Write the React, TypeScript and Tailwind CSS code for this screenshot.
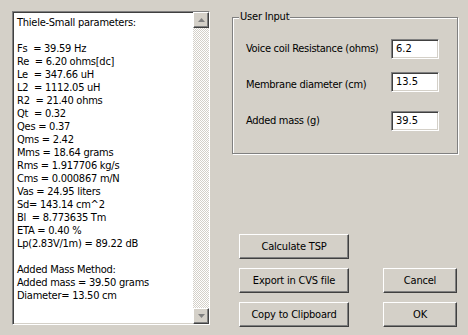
import React from "react";

const results = [
  "Thiele-Small parameters:",
  "",
  "Fs  = 39.59 Hz",
  "Re  = 6.20 ohms[dc]",
  "Le  = 347.66 uH",
  "L2  = 1112.05 uH",
  "R2  = 21.40 ohms",
  "Qt  = 0.32",
  "Qes = 0.37",
  "Qms = 2.42",
  "Mms = 18.64 grams",
  "Rms = 1.917706 kg/s",
  "Cms = 0.000867 m/N",
  "Vas = 24.95 liters",
  "Sd= 143.14 cm^2",
  "Bl  = 8.773635 Tm",
  "ETA = 0.40 %",
  "Lp(2.83V/1m) = 89.22 dB",
  "",
  "Added Mass Method:",
  "Added mass = 39.50 grams",
  "Diameter= 13.50 cm",
];

const raised =
  "border border-t-white border-l-white border-r-[#404040] border-b-[#404040] shadow-[inset_-1px_-1px_0_#808080,inset_1px_1px_0_#d4d0c8] bg-[#d4d0c8]";
const sunken =
  "border border-t-[#808080] border-l-[#808080] border-r-white border-b-white shadow-[inset_1px_1px_0_#404040,inset_-1px_-1px_0_#d4d0c8]";

const Arrow = ({ up }: { up?: boolean }) => (
  <svg width="7" height="5" viewBox="0 0 7 5">
    {up ? (
      <path d="M3.5 0 L7 4 L0 4 Z" fill="#808080" />
    ) : (
      <path d="M0 0 L7 0 L3.5 4 Z" fill="#808080" />
    )}
  </svg>
);

const Button = ({ label }: { label: string }) => (
  <button className={`${raised} h-[25px] text-[11px] tracking-[-0.2px] text-black leading-none`}>{label}</button>
);

const Field = ({ label, value, labelOffset }: { label: string; value: string; labelOffset: string }) => (
  <div className="flex items-start justify-between">
    <span className={`${labelOffset} text-[11px] leading-[14px] tracking-[-0.3px] whitespace-nowrap`}>{label}</span>
    <div className={`${sunken} shrink-0 bg-white w-[48px] h-[20px] pl-[4px] pt-[2px] text-[11px] leading-[14px]`}>{value}</div>
  </div>
);

export default function App() {
  return (
    <div
      className="w-[468px] h-[335px] bg-[#d4d0c8] flex items-start pl-[12px] text-black"
      style={{ fontFamily: '"DejaVu Sans Condensed", "Liberation Sans", Arial, sans-serif' }}
    >
      {/* results box */}
      <div className={`${sunken} mt-[11px] w-[198px] h-[314px] bg-white flex`}>
        <div className="flex-1 pl-[4px] pt-[4px] text-[11px] leading-[13px] tracking-[-0.25px] whitespace-pre">
          {results.map((line, i) => (
            <div key={i} className="h-[13px]">
              {line}
            </div>
          ))}
        </div>
        <div className="w-[16px] flex flex-col bg-[repeating-conic-gradient(#d4d0c8_0_25%,#ffffff_0_50%)] bg-[length:2px_2px]">
          <div className={`${raised} h-[16px] flex items-center justify-center`}>
            <Arrow up />
          </div>
          <div className="flex-1" />
          <div className={`${raised} h-[16px] flex items-center justify-center`}>
            <Arrow />
          </div>
        </div>
      </div>

      {/* right side */}
      <div className="ml-[22px] mt-[17px] w-[226px] flex flex-col">
        <div className="relative h-[137px] border border-[#808080] shadow-[1px_1px_0_#fff,inset_1px_1px_0_#fff] pl-[13px] pr-[18px] pt-[21px] flex flex-col">
          <span className="absolute -top-[8px] left-[6px] px-[1px] bg-[#d4d0c8] text-[11px] leading-[14px] tracking-[-0.2px]">
            User Input
          </span>
          <Field label="Voice coil Resistance (ohms)" value="6.2" labelOffset="mt-[3px]" />
          <div className="h-[13px]" />
          <Field label="Membrane diameter (cm)" value="13.5" labelOffset="mt-[6px]" />
          <div className="h-[19px]" />
          <Field label="Added mass (g)" value="39.5" labelOffset="mt-[3px]" />
        </div>

        <div className="mt-[80px] flex justify-between pl-[7px] pr-[1px]">
          <div className="flex flex-col gap-[9px] w-[110px]">
            <Button label="Calculate TSP" />
            <Button label="Export in CVS file" />
            <Button label="Copy to Clipboard" />
          </div>
          <div className="flex flex-col justify-end gap-[9px] w-[74px]">
            <Button label="Cancel" />
            <Button label="OK" />
          </div>
        </div>
      </div>
    </div>
  );
}
